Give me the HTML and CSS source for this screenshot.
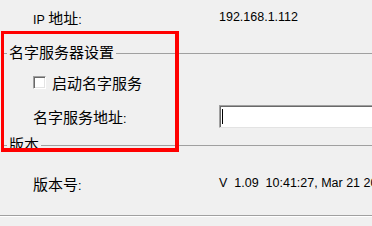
FILE: index.html
```html
<!DOCTYPE html>
<html lang="zh-CN">
<head>
    <meta charset="UTF-8">
    <title>设置</title>
    <link rel="stylesheet" href="styles.css">
</head>
<body>
    <div class="panel">
        <div class="row ip-row">
            <div class="label"><span class="latin">IP</span> 地址<span class="latin">:</span></div>
            <div class="value">192.168.1.112</div>
        </div>

        <div class="group-title first">
            <div class="rule lead"></div>
            <span>名字服务器设置</span>
            <div class="rule tail"></div>
        </div>

        <div class="row check-row">
            <div class="checkbox"></div>
            <span>启动名字服务</span>
        </div>

        <div class="row addr-row">
            <div class="label">名字服务地址<span class="latin">:</span></div>
            <div class="field"><span class="caret"></span></div>
        </div>

        <div class="group-title second">
            <div class="rule lead"></div>
            <span>版本</span>
            <div class="rule tail"></div>
        </div>

        <div class="row version-row">
            <div class="label">版本号<span class="latin">:</span></div>
            <div class="value">V  1.09  10:41:27, Mar 21 2018</div>
        </div>

        <div class="etched"></div>
    </div>

    <!-- highlight drawn over the dialog -->
    <div class="highlight"></div>
</body>
</html>
```

FILE: styles.css
```css
body {
    margin: 0;
    width: 372px;
    height: 226px;
    overflow: hidden;
    background-color: #f0f0f0;
    color: #000;
    font-family: 'Liberation Sans', 'Noto Sans CJK SC', sans-serif;
    font-size: 15px;
    position: relative;
}

.panel {
    width: 372px;
}

.row {
    display: flex;
    align-items: center;
}

.label {
    width: 186px;
    flex-shrink: 0;
    padding-left: 33px;
    box-sizing: border-box;
    white-space: nowrap;
    font-family: 'Noto Sans CJK SC', sans-serif;
}

.latin {
    font-family: 'Liberation Sans', sans-serif;
    font-size: 12.5px;
}

.value {
    padding-left: 33px;
    font-size: 12.5px;
    white-space: pre;
}

.ip-row {
    height: 34px;
}

.group-title {
    display: flex;
    align-items: flex-start;
    padding-left: 4px;
    font-family: 'Noto Sans CJK SC', sans-serif;
}

.group-title span {
    line-height: 16px;
    padding: 0 2px;
    white-space: nowrap;
}

.rule {
    height: 1px;
    margin-top: 9px;
    background-color: #a0a0a0;
}

.rule.lead {
    width: 3px;
}

.rule.tail {
    flex: 1;
}

.group-title.first {
    height: 39px;
    padding-top: 10px;
    box-sizing: border-box;
}

.group-title.second {
    height: 15px;
    margin-top: -5px;
}

.check-row {
    height: 19px;
    padding-left: 33px;
    font-family: 'Noto Sans CJK SC', sans-serif;
}

.checkbox {
    width: 13px;
    height: 13px;
    box-sizing: border-box;
    margin-right: 6px;
    background: #fff;
    border-top: 1px solid #a0a0a0;
    border-left: 1px solid #a0a0a0;
    border-right: 1px solid #fff;
    border-bottom: 1px solid #fff;
    box-shadow: inset 1px 1px 0 #696969, inset -1px -1px 0 #e3e3e3;
}

.addr-row {
    height: 49px;
}

.field {
    width: 200px;
    height: 23px;
    margin-left: 33px;
    flex-shrink: 0;
    box-sizing: border-box;
    background: #fff;
    border-top: 1px solid #a0a0a0;
    border-left: 1px solid #a0a0a0;
    border-bottom: 1px solid #e3e3e3;
    box-shadow: inset 1px 1px 0 #696969;
    padding: 2px 0 0 2px;
}

.caret {
    display: block;
    width: 1px;
    height: 15px;
    margin-top: 1px;
    background: #000;
}

.version-row {
    height: 64px;
}

.etched {
    height: 1px;
    background-color: #a0a0a0;
    border-bottom: 1px solid #fff;
}

.highlight {
    position: absolute;
    left: 1px;
    top: 31px;
    width: 178px;
    height: 121px;
    box-sizing: border-box;
    border-style: solid;
    border-color: #ff0000;
    border-width: 3px 4px 4px 3px;
}
```
